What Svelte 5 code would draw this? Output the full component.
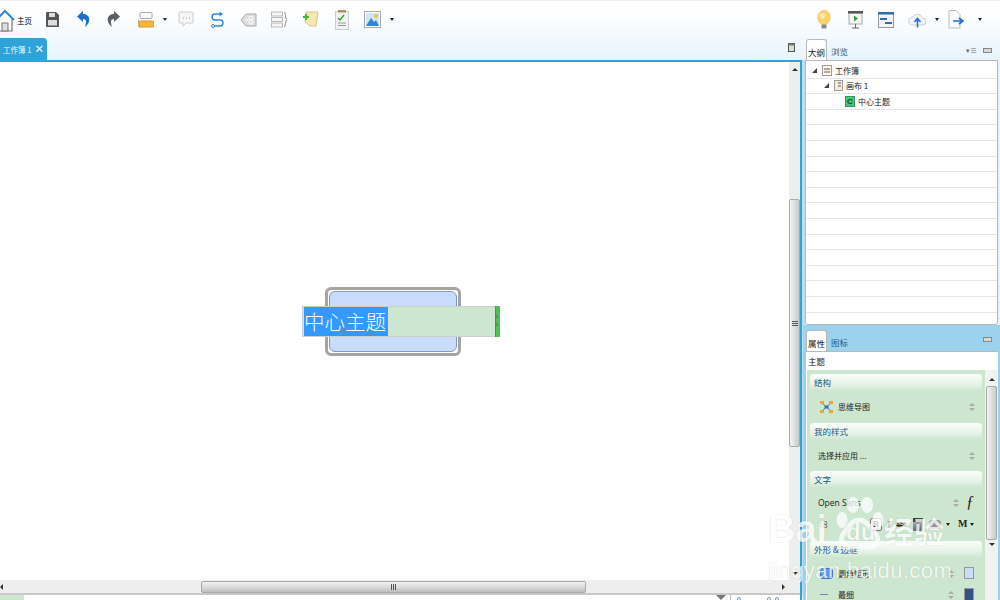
<script>
    let outlineRows = Array(16).fill(0);
    const gripLines = [0, 1, 2];
</script>

<div class="app">
    <div class="left">
        <div class="toolbar">
            <button class="home">
                <svg width="16" height="24" viewBox="0 0 16 24">
                    <path d="M-4 12 L5 3 L14 12" fill="none" stroke="#2f86d8" stroke-width="2"/>
                    <path d="M-2 11 V23 H12 V11" fill="#fff" stroke="#777" stroke-width="1.2"/>
                    <rect x="2" y="15" width="6" height="8" fill="#ddd" stroke="#777"/>
                </svg>
                <span>主页</span>
            </button>
            <button class="save">
                <svg width="15" height="17" viewBox="0 0 15 17">
                    <path d="M1 2 a1 1 0 0 1 1-1 H11 L14 4 V15 a1 1 0 0 1-1 1 H2 a1 1 0 0 1-1-1z" fill="#555"/>
                    <rect x="4" y="2" width="6" height="4" fill="#ddd"/>
                    <rect x="3" y="9" width="9" height="5.500" fill="#ddd"/>
                </svg>
            </button>
            <button>
                <svg width="13" height="17" viewBox="0 0 13 17">
                    <path d="M6 0 L0 5.500 L6 11 V8 C9 8 10 10 8 16 C14 12 14 3 6 3z" fill="#1f6fd0"/>
                </svg>
            </button>
            <button class="redo">
                <svg width="13" height="17" viewBox="0 0 13 17">
                    <path d="M7 0 L13 5.500 L7 11 V8 C4 8 3 10 5 16 C-1 12 -1 3 7 3z" fill="#5a5f66"/>
                </svg>
            </button>
            <button class="shape-btn">
                <svg width="16" height="16" viewBox="0 0 16 16">
                    <rect x="2" y=".5" width="12" height="6" rx="1" fill="#fafafa" stroke="#aaa"/>
                    <path d="M.5 7 V14 a1 1 0 0 0 1 1 H3" fill="none" stroke="#bbb"/>
                    <rect x="1" y="9" width="15" height="6" rx="1" fill="#f6b73c" stroke="#d99a2b"/>
                </svg>
            </button>
            <span class="caret topic-caret"></span>
            <button class="comment">
                <svg width="16" height="17" viewBox="0 0 16 17">
                    <path d="M1 2 a1 1 0 0 1 1-1 H14 a1 1 0 0 1 1 1 V11 a1 1 0 0 1-1 1 H8 L5 15 V12 H2 a1 1 0 0 1-1-1z" fill="#f6f6f6" stroke="#ccc"/>
                    <path d="M5 7 h1 M8 7 h1 M11 7 h1" stroke="#999"/>
                </svg>
            </button>
            <button>
                <svg width="15" height="17" viewBox="0 0 15 17">
                    <path d="M11 3 H5 a3 3 0 0 0 0 6 H10 a3 3 0 0 1 0 6 H4" fill="none" stroke="#2f86d8" stroke-width="1.400"/>
                    <path d="M9.500 .5 L13 3 L9.500 5.500z" fill="#2f86d8"/>
                    <circle cx="3" cy="15" r="1.500" fill="#fff" stroke="#2f86d8"/>
                </svg>
            </button>
            <button>
                <svg width="17" height="16" viewBox="0 0 17 16">
                    <path d="M1 8 L6 2 H16 V14 H6z" fill="#ddd" stroke="#aaa"/>
                    <path d="M5 8 h3 M9 4.500 h4 v3 h-4z M9 9 h4 v3 h-4z" fill="none" stroke="#fafafa"/>
                </svg>
            </button>
            <button>
                <svg width="17" height="17" viewBox="0 0 17 17">
                    <rect x=".5" y="1" width="11" height="4" fill="#f5f5f5" stroke="#bbb"/>
                    <rect x=".5" y="6.500" width="11" height="4" fill="#f5f5f5" stroke="#bbb"/>
                    <rect x=".5" y="12" width="11" height="4" fill="#f5f5f5" stroke="#bbb"/>
                    <path d="M13 1 C15 1 14 8 16 8.500 C14 9 15 16 13 16" fill="none" stroke="#888"/>
                </svg>
            </button>
            <button>
                <svg width="17" height="17" viewBox="0 0 17 17">
                    <path d="M4 1 H16 L14 15 H8 L3 11z" fill="#f7e6b5" stroke="#d8c58c"/>
                    <path d="M1 6 h6 M4 3 v6" stroke="#4caf3c" stroke-width="2.200"/>
                </svg>
            </button>
            <button>
                <svg width="14" height="20" viewBox="0 0 14 20">
                    <rect x=".5" y="1.500" width="13" height="18" fill="#f2f2f2" stroke="#ccc"/>
                    <rect x="3" y="0" width="8" height="2.500" fill="#a98f66"/>
                    <path d="M3 8 L5 10 L9 5" fill="none" stroke="#3f9c3a" stroke-width="1.400"/>
                    <path d="M3 13 h8 M3 15.500 h8" stroke="#999"/>
                </svg>
            </button>
            <button>
                <svg width="17" height="17" viewBox="0 0 17 17">
                    <rect x=".5" y=".5" width="16" height="16" fill="#fff" stroke="#aaa"/>
                    <rect x="2" y="2" width="13" height="13" fill="#cfe5fa"/>
                    <path d="M2 15 L7 7 L10 11 L12 9 L15 15z" fill="#2f86d8"/>
                    <circle cx="12" cy="5" r="2" fill="#f5c33b"/>
                </svg>
            </button>
            <span class="caret image-caret"></span>
        </div>

        <div class="tabbar">
            <div class="tab"><span>工作簿 1</span><b>×</b></div>
            <svg class="maximize" width="7" height="9" viewBox="0 0 7 9">
                <rect x=".5" y=".5" width="6" height="8" fill="#cfe7cf" stroke="#555"/>
                <rect x=".5" y=".5" width="6" height="2" fill="#777"/>
            </svg>
        </div>

        <div class="editor">
            <div class="canvas-row">
                <div class="canvas">
                    <div class="topic">
                        <div class="topic-inner"></div>
                        <div class="title-edit">
                            <span class="selected">中心主题</span>
                            <i class="handle"></i>
                        </div>
                    </div>
                </div>
                <div class="vscroll">
                    <span class="arrow up"></span>
                    <div class="vtrack">
                        <div class="vthumb">
                            {#each gripLines as _}<i></i>{/each}
                        </div>
                    </div>
                    <span class="arrow down"></span>
                </div>
            </div>
            <div class="hscroll">
                <span class="arrow lf"></span>
                <div class="hthumb">
                    {#each gripLines as _}<i></i>{/each}
                </div>
                <span class="arrow rt"></span>
            </div>
        </div>

        <div class="statusbar">
            <div class="status-green"></div>
            <div class="status-tools">
                <span class="funnel"></span>
                <span class="sep"></span>
                <span class="dot first"></span>
                <span class="dot"></span>
                <span class="dot"></span>
            </div>
        </div>
    </div>

    <div class="right">
        <div class="top-icons">
            <svg width="14" height="20" viewBox="0 0 14 20">
                <ellipse cx="7" cy="7.500" rx="6" ry="7" fill="#fbd467" stroke="#f0c560"/>
                <ellipse cx="5.500" cy="6" rx="2.500" ry="3" fill="#fdeeb0"/>
                <rect x="4.500" y="14.500" width="5" height="4" fill="#888"/>
            </svg>
            <svg class="present" width="17" height="18" viewBox="0 0 17 18">
                <rect x="2" y="2" width="13" height="11" fill="#f6f6f6" stroke="#aaa"/>
                <rect x="1" y="0" width="15" height="2.500" fill="#555"/>
                <path d="M7 4.500 L11 7.500 L7 10.500z" fill="#3f9c3a"/>
                <path d="M8.500 13 V17 M5 17 H12" stroke="#666"/>
            </svg>
            <svg class="gantt" width="16" height="16" viewBox="0 0 16 16">
                <rect x=".5" y=".5" width="15" height="15" fill="#f4f4f4" stroke="#999"/>
                <rect x="0" y="0" width="16" height="2.500" fill="#2c6db0"/>
                <rect x="2" y="6" width="7" height="2" fill="#2c6db0"/>
                <rect x="7" y="10" width="7" height="2" fill="#2c6db0"/>
            </svg>
            <svg class="cloud" width="19" height="16" viewBox="0 0 19 16">
                <path d="M5 13 a4 4 0 0 1-.5-8 a5.500 5.500 0 0 1 10 1 a3.500 3.500 0 0 1 0 7z" fill="#f2f6fa" stroke="#c8d0d8"/>
                <path d="M9.500 15.500 V7 M6.500 10 L9.500 6.500 L12.500 10" fill="none" stroke="#1f6fd0" stroke-width="1.500"/>
            </svg>
            <span class="caret cloud-caret"></span>
            <svg class="export" width="18" height="19" viewBox="0 0 18 19">
                <path d="M1 .5 H8 L12 4.500 V18 H1z" fill="#fafafa" stroke="#bbb"/>
                <path d="M5 11 H14 M11 8 L15 11 L11 14" fill="none" stroke="#1f6fd0" stroke-width="1.600"/>
            </svg>
            <span class="caret export-caret"></span>
        </div>

        <div class="tabs outline-tabs">
            <span class="ptab active">大纲</span>
            <span class="ptab">浏览</span>
            <div class="spacer"></div>
            <span class="mini-menu">▾≡</span>
            <span class="mini-box"></span>
        </div>
        <div class="outline">
            <div class="row"><i class="tw"></i><svg width="10" height="11" viewBox="0 0 10 11"><rect x=".5" y=".5" width="9" height="10" fill="#fdf6e0" stroke="#a99"/><path d="M2 4 h6 M2 7 h6" stroke="#557"/></svg><span>工作簿</span></div>
            <div class="row lvl1"><i class="tw"></i><svg width="9" height="11" viewBox="0 0 9 11"><rect x=".5" y=".5" width="8" height="10" fill="#f5ecd8" stroke="#a99"/><path d="M4 3 h3 M4 6 h3" stroke="#557"/></svg><span>画布 1</span></div>
            <div class="row lvl2"><b class="c-icon">C</b><span>中心主题</span></div>
            {#each outlineRows as _}<div class="row"></div>{/each}
        </div>

        <div class="bottom">
            <div class="tabs prop-tabs">
                <span class="ptab active">属性</span>
                <span class="ptab">图标</span>
                <div class="spacer"></div>
                <span class="mini-box"></span>
            </div>
            <div class="props">
                <div class="props-title">主题</div>
                <div class="props-body">
                    <div class="sections">
                        <div class="sec-head">结构</div>
                        <div class="sec-row indent">
                            <svg width="13" height="12" viewBox="0 0 13 12"><path d="M2 2 L11 10 M11 2 L2 10" stroke="#4a7fc0"/><rect x="0" y="0" width="4" height="3" fill="#eba53a"/><rect x="9" y="0" width="4" height="3" fill="#eba53a"/><rect x="0" y="9" width="4" height="3" fill="#eba53a"/><rect x="9" y="9" width="4" height="3" fill="#eba53a"/><rect x="4.500" y="4.500" width="4" height="3" fill="#3d6fb5"/></svg>
                            <span>思维导图</span><em class="spin"></em>
                        </div>
                        <div class="sec-head">我的样式</div>
                        <div class="sec-row"><span>选择并应用 ...</span><em class="spin"></em></div>
                        <div class="sec-head">文字</div>
                        <div class="sec-row text-row"><span class="latin">Open Sans</span><em class="spin near"></em><span class="script-f">ƒ</span></div>
                        <div class="sec-row font-tools">
                            <span class="latin size">18</span>
                            <span class="bold-btn">B</span>
                            <span class="it">I</span>
                            <span class="strike">abc</span>
                            <span class="swatch-a"></span>
                            <span class="swatch-b"></span>
                            <span class="caret"></span>
                            <span class="m">M</span>
                            <span class="caret"></span>
                        </div>
                        <div class="sec-head">外形 &amp; 边框</div>
                        <div class="sec-row indent shape-row">
                            <i class="round-shape"></i><span>圆角矩形</span><em class="spin near"></em><i class="color light"></i>
                        </div>
                        <div class="sec-row indent line-row">
                            <i class="thin-line"></i><span>最细</span><em class="spin near"></em><i class="color dark"></i>
                        </div>
                    </div>
                    <div class="side-scroll">
                        <span class="arrow up"></span>
                        <div class="side-thumb"></div>
                        <span class="arrow down"></span>
                    </div>
                </div>
            </div>
        </div>
    </div>

    <div class="watermark">
        <div class="wm-main">
            <span class="wm-bai">Bai</span>
            <svg class="wm-paw" width="50" height="56" viewBox="0 0 50 56">
                <ellipse cx="8" cy="25" rx="5.500" ry="8"/>
                <ellipse cx="19" cy="10" rx="6" ry="8"/>
                <ellipse cx="33" cy="10" rx="6" ry="8"/>
                <ellipse cx="44" cy="25" rx="5.500" ry="8"/>
                <path d="M25 25 C17 25 15 33 10 38 C4 45 10 54 19 52 C23 51 28 51 32 52 C42 54 47 45 41 38 C36 33 33 25 25 25z" fill="none" stroke="#fff" stroke-width="5"/>
            </svg>
            <span class="wm-du">du</span>
            <span class="wm-cn">经验</span>
        </div>
        <div class="wm-url">jingyan.baidu.com</div>
    </div>
</div>

<style>
    :global(body) {
        margin: 0;
        overflow: hidden;
    }
    .app {
        position: relative;
        display: flex;
        width: 1000px;
        height: 600px;
        box-sizing: border-box;
        border-top: 1px solid #efefef;
        overflow: hidden;
        font-family: "Noto Sans CJK SC", "Liberation Sans", sans-serif;
        font-size: 8px;
        color: #222;
        background: linear-gradient(#fff 12px, #e6f3fc 61px);
    }
    i, em { display: block; font-style: normal; }
    button {
        display: flex;
        align-items: center;
        justify-content: center;
        width: 31px;
        padding: 0;
        border: 0;
        background: none;
        font: inherit;
    }
    .spacer { flex: 1; }
    .caret {
        display: inline-block;
        flex: none;
        width: 0;
        height: 0;
        border-left: 2.500px solid transparent;
        border-right: 2.500px solid transparent;
        border-top: 3px solid #222;
    }

    .left {
        display: flex;
        flex-direction: column;
        width: 805px;
        flex: none;
    }
    .toolbar {
        display: flex;
        align-items: center;
        height: 37px;
        flex: none;
    }
    .home {
        width: 36px;
        justify-content: flex-start;
        gap: 1px;
        margin-top: 1px;
    }
    .home svg { overflow: visible; }
    .home span { font-size: 7.500px; }
    .save { width: 32px; }
    .redo { margin-left: -1px; }
    .shape-btn { margin-left: 1px; }
    .topic-caret { margin-left: 2px; }
    .comment { margin-left: 1px; width: 36px; }
    .comment + button { margin-left: -2px; }
    .image-caret { margin-left: 2px; }

    .tabbar {
        display: flex;
        align-items: flex-end;
        height: 22px;
        flex: none;
    }
    .tab {
        display: flex;
        align-items: center;
        gap: 3px;
        width: 47px;
        height: 22px;
        box-sizing: border-box;
        padding-left: 3px;
        background: #2fa3d9;
        border-top-right-radius: 4px;
        color: #e8f6fd;
        font-size: 7.500px;
        white-space: nowrap;
    }
    .tab b { font-size: 10px; line-height: 1; color: #fff; }
    .maximize { margin: 0 10px 8px auto; }

    .editor {
        flex: 1;
        display: flex;
        flex-direction: column;
        min-height: 0;
        margin-right: 3px;
        border-top: 2px solid #2fa3d9;
        border-right: 2px solid #2fa3d9;
        box-shadow: 3px 0 0 #b7def5;
        background: #fff;
    }
    .canvas-row { flex: 1; display: flex; min-height: 0; }
    .canvas {
        flex: 1;
        display: flex;
        align-items: center;
        justify-content: center;
        padding-right: 3px;
        background: #fff;
    }
    .topic {
        position: relative;
        width: 136px;
        height: 69px;
        box-sizing: border-box;
        padding: 1px;
        border: 3px solid #a4a4a4;
        border-radius: 6px;
        background: #fff;
    }
    .topic-inner {
        height: 100%;
        box-sizing: border-box;
        background: #c9dcfb;
        border: 1px solid #8498c6;
        border-radius: 6px;
    }
    .title-edit {
        position: absolute;
        left: -26px;
        top: 16px;
        display: flex;
        align-items: center;
        width: 198px;
        height: 31px;
        box-sizing: border-box;
        border: 1px solid #c9d0c9;
        background: #cde6cf;
    }
    .selected {
        margin-left: 1px;
        width: 84px;
        height: 29px;
        background: #3399ff;
        color: #fff;
        font-weight: 300;
        font-size: 20.500px;
        line-height: 28px;
        white-space: nowrap;
    }
    .handle {
        position: absolute;
        right: -1px;
        top: -1px;
        bottom: -1px;
        width: 5px;
        box-sizing: border-box;
        background: #4cc44c;
        border-left: 1px solid #3aa03a;
    }
    .handle::before, .handle::after {
        content: "";
        position: absolute;
        left: 0;
        width: 2px;
        height: 3px;
        background: #6a8a6a;
    }
    .handle::before { top: 9px; }
    .handle::after { top: 17px; }

    .vscroll {
        display: flex;
        flex-direction: column;
        align-items: stretch;
        width: 11px;
        flex: none;
        box-sizing: border-box;
        padding-top: 6px;
        background: #eeeeee;
    }
    .vtrack { flex: 1; display: flex; padding: 125px 0 122px; }
    .vthumb {
        flex: 1;
        display: flex;
        flex-direction: column;
        align-items: center;
        justify-content: center;
        gap: 1px;
        background: linear-gradient(90deg, #f4f4f4, #c9c9c9);
        border: 1px solid #a9a9a9;
        border-radius: 2px;
    }
    .vthumb i { width: 6px; height: 1px; background: #555; }
    .arrow { align-self: center; width: 0; height: 0; flex: none; }
    .arrow.up { border: 3px solid transparent; border-bottom-color: #333; border-top: 0; margin-bottom: 3px; }
    .arrow.down { border: 3px solid transparent; border-top-color: #333; border-bottom: 0; margin: 3px 0 5px; }
    .arrow.lf { border: 3px solid transparent; border-right-color: #333; border-left: 0; }
    .arrow.rt { border: 3px solid transparent; border-left-color: #333; border-right: 0; }

    .hscroll {
        display: flex;
        align-items: center;
        height: 13px;
        flex: none;
        background: #eeeeee;
        border-bottom: 2px solid #c9c9c9;
    }
    .hthumb {
        display: flex;
        align-items: center;
        justify-content: center;
        gap: 1px;
        width: 385px;
        height: 12px;
        box-sizing: border-box;
        margin-left: 198px;
        border: 1px solid #a9a9a9;
        border-radius: 2px;
        background: linear-gradient(#f0f0f0, #dcdcdc 50%, #bdbdbd);
    }
    .hthumb i { width: 1px; height: 6px; background: #555; }
    .hscroll .rt { margin-left: 196px; }

    .statusbar {
        display: flex;
        height: 5px;
        flex: none;
        margin-right: 3px;
        background: #fff;
        overflow: hidden;
        border-right: 2px solid #2fa3d9;
    }
    .status-green { width: 24px; background: #cde6cf; }
    .status-tools { flex: 1; display: flex; align-items: flex-start; gap: 4px; padding-left: 692px; }
    .funnel { width: 0; height: 0; border: 5px solid transparent; border-top-color: #777; }
    .sep { width: 1px; height: 5px; margin-right: 2px; background: #bbb; }
    .dot { width: 4px; height: 4px; margin-top: 2px; box-sizing: border-box; border: 1px solid #7a9cc0; border-radius: 50%; }
    .dot.first { margin-right: 22px; }

    .right {
        position: relative;
        flex: 1;
        display: flex;
        flex-direction: column;
        min-width: 0;
    }
    .top-icons {
        display: flex;
        align-items: center;
        height: 37px;
        flex: none;
        padding-left: 12px;
    }
    .present { margin-left: 16px; }
    .gantt { margin-left: 14px; }
    .cloud { margin-left: 14px; }
    .cloud-caret { margin-left: 8px; }
    .export { margin-left: 9px; }
    .export-caret { margin-left: 12px; }

    .tabs {
        display: flex;
        align-items: flex-end;
        flex: none;
    }
    .outline-tabs { height: 22px; padding-left: 1px; }
    .ptab {
        width: 21px;
        height: 18px;
        text-align: center;
        line-height: 18px;
        color: #1c5f86;
        font-size: 8.500px;
    }
    .ptab.active {
        height: 21px;
        line-height: 24px;
        box-sizing: border-box;
        margin-right: 2px;
        background: #fff;
        color: #222;
        border: 1px solid #b8b8b8;
        border-bottom: 0;
        border-radius: 3px 3px 0 0;
    }
    .mini-menu { margin: 0 6px 6px 0; font-size: 7px; line-height: 1; color: #666; }
    .mini-box {
        width: 7px;
        height: 3px;
        margin: 0 8px 7px 0;
        border: 1px solid #888;
        background: #d8d8d8;
    }
    .outline {
        height: 265px;
        flex: none;
        box-sizing: border-box;
        margin-right: 2px;
        padding-top: 2px;
        border: 1px solid #b8b8b8;
        border-radius: 0 0 3px 3px;
        background: #fff;
        overflow: hidden;
    }
    .row {
        display: flex;
        align-items: center;
        gap: 3px;
        height: 15.600px;
        box-sizing: border-box;
        padding-left: 6px;
        border-bottom: 1px solid #e6e6e6;
    }
    .lvl1 { padding-left: 18px; }
    .lvl2 { padding-left: 39px; }
    .tw {
        width: 0;
        height: 0;
        border-style: solid;
        border-width: 0 0 5px 5px;
        border-color: transparent transparent #444 transparent;
    }
    .row svg { margin-left: 2px; }
    .c-icon {
        width: 10px;
        height: 11px;
        box-sizing: border-box;
        background: #4ec27a;
        color: #0d4a2a;
        border: 1px solid #2f9a57;
        font-size: 8px;
        line-height: 9px;
        text-align: center;
        font-family: "Liberation Sans", sans-serif;
    }

    .bottom {
        flex: 1;
        display: flex;
        flex-direction: column;
        min-height: 0;
        margin-left: -2px;
        padding-left: 3px;
        background: #9bd3ef;
    }
    .prop-tabs { height: 26px; }
    .prop-tabs .mini-box { margin-bottom: 9px; }
    .props {
        flex: 1;
        display: flex;
        flex-direction: column;
        min-height: 0;
        margin-right: 2px;
        background: #fff;
        border-top: 1px solid #b8b8b8;
    }
    .props-title { height: 18px; flex: none; padding-left: 2px; line-height: 19px; font-size: 8.500px; }
    .props-body { flex: 1; display: flex; min-height: 0; padding-left: 1px; }
    .sections {
        flex: 1;
        display: flex;
        flex-direction: column;
        min-width: 0;
        padding: 4px 3px 0;
        background: #cde6cf;
        overflow: hidden;
    }
    .sec-head {
        height: 17px;
        flex: none;
        box-sizing: border-box;
        padding-left: 4px;
        line-height: 16px;
        border-radius: 3px 3px 0 0;
        background: linear-gradient(#fbfdfb, #e6f3e7 60%, #cde6cf);
        color: #14598a;
        font-size: 8.500px;
    }
    .sec-row {
        display: flex;
        align-items: center;
        gap: 5px;
        height: 31.500px;
        flex: none;
        box-sizing: border-box;
        padding-left: 8px;
    }
    .sec-row.indent { padding-left: 10px; }
    .text-row { height: 28px; }
    .font-tools { gap: 3px; height: 16px; margin-bottom: 9px; }
    .shape-row { height: 30px; }
    .line-row { height: 12px; }
    .spin {
        position: relative;
        width: 0;
        height: 0;
        margin-left: auto;
        margin-right: 7px;
        border-left: 3px solid transparent;
        border-right: 3px solid transparent;
        border-bottom: 3px solid #aaa;
        transform: translateY(-2px);
    }
    .spin::after {
        content: "";
        position: absolute;
        left: -3px;
        top: 5px;
        border-left: 3px solid transparent;
        border-right: 3px solid transparent;
        border-top: 3px solid #aaa;
    }
    .spin.near { margin-right: 0; }
    .latin { font-family: "Open Sans", sans-serif; font-size: 8.500px; }
    .script-f {
        margin: 0 8px 0 2px;
        font-family: "Liberation Serif", serif;
        font-style: italic;
        font-size: 16px;
        line-height: 1;
    }
    .size { width: 49px; opacity: .7; }
    .bold-btn {
        width: 12px;
        height: 13px;
        box-sizing: border-box;
        text-align: center;
        border: 1px solid #777;
        border-radius: 2px;
        background: #eee;
        font: bold 9px/11px "Liberation Serif", serif;
    }
    .it { width: 8px; text-align: center; font: italic bold 11px/1 "Liberation Serif", serif; }
    .strike { width: 12px; font: 7px/1 "Liberation Sans", sans-serif; text-decoration: line-through; }
    .swatch-a { width: 10px; height: 13px; margin-left: 2px; background: linear-gradient(#444 30%, #aaa 30%, #666); }
    .swatch-b { width: 12px; height: 9px; margin-left: 3px; background: #999; border-radius: 3px; }
    .swatch-b + .caret { margin-left: 2px; }
    .m { margin-left: 5px; font: bold 10px/1 "Liberation Serif", serif; }
    .round-shape { width: 13px; height: 11px; box-sizing: border-box; background: #5d9be0; border: 1px solid #3f7cc0; border-radius: 3px; }
    .thin-line { width: 8px; height: 1px; margin-right: 5px; background: #6d87a8; }
    .color { width: 10px; height: 12px; flex: none; margin-left: 5px; margin-right: 8px; box-sizing: border-box; border: 1px solid #999; }
    .color.light { background: #c9dcfb; }
    .color.dark { background: #345085; height: 14px; margin-top: 2px; }

    .side-scroll {
        display: flex;
        flex-direction: column;
        align-items: stretch;
        width: 13px;
        flex: none;
        box-sizing: border-box;
        padding-top: 8px;
        background: #f2f2f2;
    }
    .side-thumb {
        height: 154px;
        box-sizing: border-box;
        margin: 2px 1px 0;
        border: 1px solid #a9a9a9;
        border-radius: 2px;
        background: linear-gradient(90deg, #f4f4f4, #c9c9c9);
    }

    /* baidu watermark sits over everything */
    .watermark {
        position: absolute;
        left: 768px;
        top: 492px;
        width: 190px;
        color: #fff;
        opacity: .75;
        text-shadow: 0 0 1px rgba(0, 0, 0, .25);
        pointer-events: none;
    }
    .wm-main { display: flex; align-items: flex-end; height: 58px; }
    .wm-bai { width: 66px; font: bold 38px/44px "Liberation Sans", sans-serif; }
    .wm-paw { flex: none; fill: #fff; }
    .wm-du {
        width: 36px;
        margin-left: -38px;
        margin-bottom: 4px;
        font: bold 24px/30px "Liberation Sans", sans-serif;
    }
    .wm-cn { margin-left: 2px; font-size: 30px; line-height: 42px; font-weight: 700; white-space: nowrap; }
    .wm-url {
        margin-top: 8px;
        font: 22px/24px "Liberation Sans", sans-serif;
        letter-spacing: .4px;
        white-space: nowrap;
    }
</style>
